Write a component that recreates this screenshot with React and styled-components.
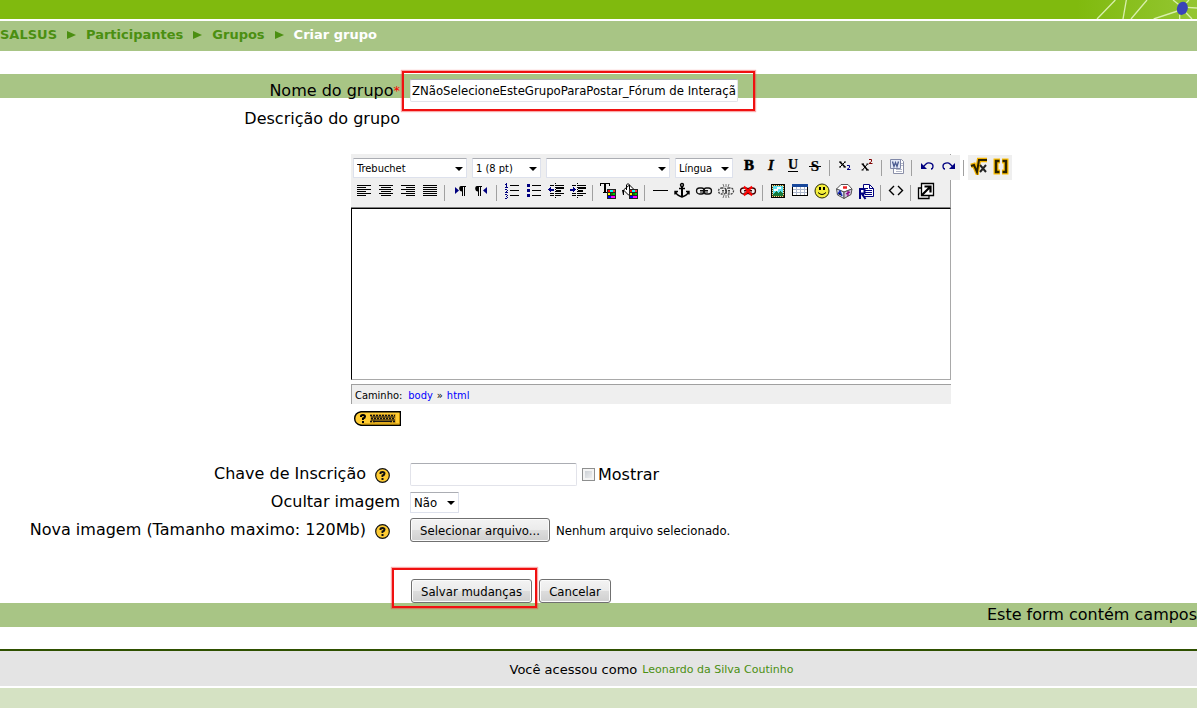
import React, { useRef, useState } from 'react';
import styled, { createGlobalStyle } from 'styled-components';

const GlobalStyle = createGlobalStyle`
  * { box-sizing: border-box; }
  body {
    margin: 0;
    background: #fff;
    color: #000;
    font-family: Verdana, 'DejaVu Sans', sans-serif;
    font-size: 16px;
  }
`;

const uiFont = "Tahoma, 'DejaVu Sans Condensed', 'DejaVu Sans', sans-serif";

const Page = styled.div`
  min-height: 100vh;
  display: flex;
  flex-direction: column;
  overflow-x: hidden;
`;

const Banner = styled.header`
  height: 19px;
  display: flex;
  justify-content: flex-end;
  background: #80ba0e;
`;

const Breadcrumb = styled.nav`
  display: flex;
  align-items: center;
  gap: 9px;
  height: 30px;
  margin-top: 2px;
  padding-bottom: 3px;
  background: #a8c585;
  color: #4b8f11;
  font-size: 13px;
  font-weight: bold;
`;

const CrumbLink = styled.a`
  color: inherit;
  text-decoration: none;
`;

const Current = styled.span`
  color: #fff;
`;

const Form = styled.form`
  padding-top: 23px;
`;

const Row = styled.div`
  display: flex;
  align-items: ${p => (p.$band ? 'flex-start' : 'center')};
  gap: 10px;
  height: 24px;
  padding-top: ${p => (p.$band ? '5px' : '0')};
  margin-top: ${p => p.$gap || 0}px;
  background: ${p => (p.$band ? '#a8c585' : 'transparent')};
`;

const LabelCell = styled.div`
  display: flex;
  flex: none;
  justify-content: flex-end;
  align-items: center;
  width: 400px;
  line-height: 24px;
  padding-right: ${p => (p.$help ? '10px' : '0')};
`;

const Required = styled.span`
  color: #f00;
  font-size: 13px;
`;

const HelpButton = styled.button`
  display: flex;
  margin-left: 9px;
  padding: 3px 0 0;
  border: 0;
  background: none;
`;

const FieldCell = styled.div`
  display: flex;
  align-items: center;
`;

const TextInput = styled.input`
  width: ${p => p.$width}px;
  height: 23px;
  padding: 1px;
  border: 1px solid #e2e3ea;
  border-top-color: #abadb3;
  border-radius: 2px;
  background: #fff;
  color: #000;
  font-family: ${uiFont};
  font-size: 13px;
`;

const CheckLabel = styled.label`
  display: flex;
  align-items: center;
  gap: 3px;
  margin-left: 5px;
`;

const Check = styled.input`
  appearance: none;
  width: 13px;
  height: 13px;
  margin: 0;
  border: 1px solid #8e8f8f;
  background: linear-gradient(135deg, #c4c9cf, #f6f6f6);
  box-shadow: inset 0 0 0 2px #f4f4f4;
  &:checked { background: #4b8f11; }
`;

const SelectBox = styled.span`
  position: relative;
  display: inline-flex;
  width: ${p => p.$width}px;
  &::after {
    content: '';
    position: absolute;
    top: 50%;
    right: 4px;
    margin-top: -1px;
    border: 4px solid transparent;
    border-top-color: #000;
    border-bottom: 0;
    pointer-events: none;
  }
`;

const Select = styled.select`
  appearance: none;
  width: 100%;
  height: ${p => (p.$small ? '20px' : '21px')};
  padding: 1px 3px 0;
  border: 1px solid #dde1ec;
  border-top-color: #abadb3;
  border-radius: 1px;
  background: #fff;
  color: #000;
  font-family: ${uiFont};
  font-size: ${p => (p.$small ? '11px' : '13px')};
`;

const Button = styled.button`
  height: 24px;
  width: ${p => p.$width}px;
  padding: 0;
  border: 1px solid #707070;
  border-radius: 3px;
  background: linear-gradient(#f3f3f3, #ebebeb 50%, #dddddd 50%, #cfcfcf);
  box-shadow: inset 0 0 0 1px #fbfbfb;
  color: #000;
  font-family: ${uiFont};
  font-size: 13px;
  white-space: nowrap;
`;

const FileName = styled.span`
  margin-left: 6px;
  font-family: ${uiFont};
  font-size: 13px;
`;

const Marked = styled.div`
  position: relative;
  display: flex;
  &::after {
    content: '';
    position: absolute;
    inset: ${p => p.$inset};
    border: 2px solid #f01010;
    box-shadow: 0 0 1px 1px rgba(240, 40, 40, 0.4);
    pointer-events: none;
  }
`;

const Editor = styled.div`
  width: 600px;
  margin: 23px 0 0 351px;
`;

const Toolbar = styled.div`
  height: 54px;
  padding: 1px 0 0 2px;
  border-right: 1px solid #a0a0a0;
  border-bottom: 1px solid #808080;
  background: #efefef;
`;

const ToolRow = styled.div`
  display: flex;
  align-items: center;
  height: 25px;
`;

const SelectGroup = styled.div`
  display: flex;
  flex: none;
  gap: 5px;
  margin-right: 5px;
`;

const ToolButton = styled.button`
  display: flex;
  flex: none;
  align-items: center;
  justify-content: center;
  width: 22px;
  height: ${p => (p.$short ? '22px' : '25px')};
  padding: 0 0 3px;
  border: 0;
  background: #efefef;
`;

const Separator = styled.span`
  flex: none;
  width: 8px;
  height: 16px;
  background: linear-gradient(#a0a0a0, #a0a0a0) 3px 0 / 1px 100% no-repeat;
`;

const Canvas = styled.textarea`
  display: block;
  width: 100%;
  height: 172px;
  border: 1px solid #a9a9a9;
  border-top-color: #000;
  border-left-color: #000;
  resize: none;
  outline: none;
`;

const StatusBar = styled.div`
  display: flex;
  align-items: center;
  gap: 4px;
  height: 20px;
  margin-top: 4px;
  padding: 1px 0 0 3px;
  border-left: 1px solid #a0a0a0;
  border-top: 1px solid #a0a0a0;
  background: #efefef;
  font-family: ${uiFont};
  font-size: 11px;
`;

const PathLink = styled.a`
  color: #00f;
  text-decoration: none;
`;

const PathLabel = styled.span`
  margin-right: 2px;
`;

const KeyboardHelp = styled.button`
  display: block;
  margin: 7px 0 0 3px;
  padding: 0;
  border: 0;
  background: none;
  line-height: 0;
`;

const Actions = styled.div`
  display: flex;
  gap: 7px;
  margin: 37px 0 0 411px;
`;

const RequiredNote = styled.p`
  margin: 0;
  line-height: 24px;
  background: #a8c585;
  text-align: right;
  white-space: nowrap;
`;

const Footer = styled.footer`
  display: flex;
  justify-content: center;
  align-items: center;
  gap: 5px;
  height: 37px;
  margin-top: 22px;
  padding: 2px 0 0 106px;
  border-top: 2px solid #2f5000;
  background: #e4e4e4;
  font-size: 13px;
`;

const UserLink = styled.a`
  color: #4b8f11;
  font-size: 11px;
  text-decoration: none;
`;

const Bottom = styled.div`
  flex: 1;
  min-height: 20px;
  margin-top: 2px;
  background: #d5e2c3;
`;

const NAVY = '#000080';
const serif = "'Liberation Serif', serif";

function Letter({ children, x = 9, y = 13, size = 14, ...rest }) {
  return (
    <text x={x} y={y} fontSize={size} fontFamily={serif} fontWeight="bold" textAnchor="middle" {...rest}>
      {children}
    </text>
  );
}

function Swatches() {
  return (
    <g>
      <path fill="#222" d="M8 7h9v10H8z" />
      <path fill="#f00" d="M9 8h2v2H9z" />
      <path fill="#0ff" d="M11 8h3v2h-3z" />
      <path fill="#f33" d="M14 8h2v2h-2z" />
      <path fill="#ff0" d="M9 11h2v2H9z" />
      <path fill="#080" d="M12 11h2v2h-2z" />
      <path fill="#0c0" d="M14 11h2v2h-2z" />
      <path fill="#00f" d="M9 14h3v2H9z" />
      <path fill="#f0f" d="M12 14h4v2h-4z" />
    </g>
  );
}

function Chain({ color = '#111', dashed }) {
  return (
    <g fill="none" stroke={color} strokeWidth="1.300" strokeDasharray={dashed ? '2 1' : undefined}>
      <rect x="1.5" y="6" width="8" height="6" rx="3" />
      <rect x="8.5" y="6" width="8" height="6" rx="3" />
      <path d="M5 8.500h8M5 10h8" strokeWidth="1" />
    </g>
  );
}

const icons = {
  bold: <Letter size={15} stroke="#000" strokeWidth="0.6">B</Letter>,
  italic: <Letter size={15} fontStyle="italic" stroke="#000" strokeWidth="0.3">I</Letter>,
  underline: <g><Letter y={12} stroke="#000" strokeWidth="0.2">U</Letter><path d="M4 14h10v1H4z" /></g>,
  strike: <g><Letter y={14} size={15} stroke="#000" strokeWidth="0.2">S</Letter><path d="M3 9h12v1H3z" /></g>,
  sub: (
    <g>
      <path fill="none" stroke="#000" strokeWidth="1.600" d="M4 5l5 5" />
      <path fill="none" stroke="#000" d="M9 5l-5 5M3 5h2.500M8 5h2M3 10h2M7.500 10H10" />
      <path fill="none" stroke={NAVY} d="M11 8.500h2.500v2L11 12.500h3.500" />
    </g>
  ),
  sup: (
    <g>
      <path fill="none" stroke="#000" strokeWidth="1.600" d="M4.500 7l5 6" />
      <path fill="none" stroke="#000" d="M9.500 7l-5 6M3.500 7H6M8.500 7h2M3.500 13h2M8 13h3" />
      <path fill="none" stroke="#800000" d="M11 2.500h2.500v2L11 6.500h3.500" />
    </g>
  ),
  word: (
    <g>
      <path fill="#fff" stroke="#8a8fa8" d="M5.500 2.500h8l2 2v12h-10z" />
      <path stroke="#b4b8c8" d="M12 6.500h3M12 8.500h3M8 12.500h6M8 14.500h6" />
      <path fill="#e3e8f6" stroke="#8088a8" d="M2.500 2.500h10v9h-10z" />
      <path fill="none" stroke="#4a5a90" strokeWidth="1.300" d="M4.500 4.500L6 9.500l1.500-4 1.500 4 1.500-5" />
    </g>
  ),
  undo: (
    <g>
      <path fill={NAVY} d="M3 6v6h6z" />
      <path fill="none" stroke={NAVY} strokeWidth="1.300" d="M5 10l3-3c2-2 7-1 7 2 0 2-1 3-2 3" />
    </g>
  ),
  redo: (
    <g>
      <path fill={NAVY} d="M15 6v6H9z" />
      <path fill="none" stroke={NAVY} strokeWidth="1.300" d="M13 10l-3-3C8 5 3 6 3 9c0 2 1 3 2 3" />
    </g>
  ),
  root: (
    <g fill="none">
      <path stroke="#f5b400" strokeWidth="4.500" d="M1 9l3-1 3 7 2-12h8" />
      <path stroke="#2a2200" strokeWidth="2" d="M1 9l3-1 3 7 2-12h8" />
      <path stroke="#222" strokeWidth="2" d="M10 8l6 7M16 8l-6 7" />
    </g>
  ),
  brackets: (
    <g fill="none">
      <path stroke="#ffc000" strokeWidth="5" d="M8 4H4v11h4M10 4h4v11h-4" />
      <path stroke="#2a2200" strokeWidth="2.500" d="M7.500 4H4v11h3.500M10.500 4H14v11h-3.500" />
    </g>
  ),
  left: <path stroke="#000" d="M2 3.500h14M2 5.500h9M2 7.500h14M2 9.500h9M2 11.500h14M2 13.500h9" />,
  center: <path stroke="#000" d="M2 3.500h14M4 5.500h10M2 7.500h14M4 9.500h10M2 11.500h14M4 13.500h10" />,
  right: <path stroke="#000" d="M2 3.500h14M7 5.500h9M2 7.500h14M7 9.500h9M2 11.500h14M7 13.500h9" />,
  justify: <path stroke="#000" d="M2 3.500h14M2 5.500h14M2 7.500h14M2 9.500h14M2 11.500h14M2 13.500h14" />,
  ltr: (
    <g>
      <path fill={NAVY} d="M4 5v7l4-3.500z" />
      <path d="M10 4h5v1h-1v9h-1V5h-1v9h-1V9.500c-3.500 0-3.500-5.500-1-5.500z" />
    </g>
  ),
  rtl: (
    <g>
      <path fill={NAVY} d="M14 5v7l-4-3.500z" />
      <path d="M4 4h5v1H8v9H7V5H6v9H5V9.500C1.500 9.500 1.500 4 4 4z" />
    </g>
  ),
  ordered: (
    <g>
      <path stroke="#000" d="M7 3.500h9M7 8.500h9M7 13.500h9" />
      <path fill={NAVY} d="M3 1h1v4H3zM2 2h1v1H2zM2 5h3v1H2zM2 7h2v1H2zM4 8h1v1H4zM3 9h1v1H3zM2 10h3v1H2zM2 12h2v1H2zM4 13h1v1H4zM3 14h1v1H3zM4 15h1v1H4zM2 16h2v1H2z" />
    </g>
  ),
  bullets: (
    <g>
      <path stroke="#000" d="M7 3.500h9M7 8.500h9M7 13.500h9" />
      <path fill={NAVY} d="M2 2h3v3H2zM2 7h3v3H2zM2 12h3v3H2z" />
    </g>
  ),
  outdent: (
    <g>
      <path stroke="#000" d="M3 3.500h4M9 3.500h8M3 13.500h4M9 13.500h5M3 11.500h4M9 11.500h8" />
      <path stroke="#000" strokeWidth="2" d="M9 6h8M9 9h5" />
      <path stroke="#000" strokeDasharray="1 1" d="M8.500 1v15" />
      <path fill={NAVY} d="M1 7.500l3-3v2h3v2H4v2z" />
    </g>
  ),
  indent: (
    <g>
      <path stroke="#000" d="M3 3.500h4M9 3.500h8M3 13.500h4M9 13.500h5M3 11.500h4M9 11.500h8" />
      <path stroke="#000" strokeWidth="2" d="M9 6h8M9 9h5" />
      <path stroke="#000" strokeDasharray="1 1" d="M8.500 1v15" />
      <path fill={NAVY} d="M7 7.500l-3-3v2H1v2h3v2z" />
    </g>
  ),
  textColor: <g><path d="M1 1h10v3h-1V2H7v8h1v1H4v-1h1V2H2v2H1z" /><Swatches /></g>,
  fillColor: (
    <g>
      <path fill="#fff" stroke="#000" d="M2.500 8l6-5 5 5-6 5z" />
      <path fill="none" stroke="#000" d="M5.500 8V3q1.500-3 3 0v4" />
      <path d="M1 8h2v5H2z" />
      <Swatches />
    </g>
  ),
  rule: <path d="M2 8h15v1H2z" />,
  anchor: (
    <g fill="none" stroke="#000" strokeWidth="1.400">
      <circle cx="9" cy="3" r="1.500" />
      <path strokeWidth="2" d="M9 5v10" />
      <path d="M6 6.500h6M3 10c0 3 3 4 6 5 3-1 6-2 6-5M2 12.500V9.500h3M16 12.500V9.500h-3" />
    </g>
  ),
  link: <Chain />,
  unlink: (
    <g>
      <Chain color="#444" dashed />
      <path stroke="#777" d="M6 2l1 3M9 2v3M12 2l-1 3M6 16l1-3M9 16v-3M12 16l-1-3" />
    </g>
  ),
  noLink: <g><Chain color="#400" /><path stroke="#f00" strokeWidth="2" d="M5 4.500l8 9M13 4.500l-8 9" /></g>,
  image: (
    <g>
      <path fill="#e8d8a0" stroke="#000" d="M2.500 2.500h13v13h-13z" />
      <path fill="none" stroke="#5a4000" strokeDasharray="1 1" d="M3.500 3.500h11v11h-11z" />
      <path fill="#5ee0f0" d="M4 4h10v10H4z" />
      <path fill="#fff" d="M5 7h3V5h4v2H9v2H5z" />
      <path fill="#157a3a" d="M4 14v-2l3-3 2 2 2-2 3 3v2z" />
    </g>
  ),
  table: (
    <g>
      <path fill="#fff" stroke="#000" d="M1.500 2.500h15v11h-15z" />
      <path fill="#18489c" d="M1 2h16v3H1z" />
      <path stroke="#aeb8cc" d="M2 7.500h14M2 10.500h14M5.500 5v8M9.500 5v8M13.500 5v8" />
    </g>
  ),
  smile: (
    <g>
      <circle cx="9" cy="9" r="7" fill="#f4ee3c" stroke="#2a2a00" />
      <path d="M6 5h2v3H6zM10 5h2v3h-2z" />
      <path fill="none" stroke="#000" d="M5 10.500q4 4 8 0" />
    </g>
  ),
  chars: (
    <g stroke="#555">
      <path fill="#fff" d="M1.500 7L6 2.500h7L17 7l-8 3z" />
      <path fill="#dfe5fa" d="M1.500 7L9 10v6.500L2.500 13z" />
      <path fill="#d0c3dc" d="M17 7l-8 3v6.500l7-4z" />
      <path stroke="#e22" strokeWidth="2.500" d="M8 5.500h4" />
      <path stroke="#23b" strokeWidth="1.500" d="M3 12l2-3 2 5" />
      <path stroke="#808" strokeWidth="1.300" d="M11 12l4-2M13 9v5" />
    </g>
  ),
  replace: (
    <g fill="none" stroke={NAVY}>
      <path fill="#fff" d="M6.500 2.500h6l4 4v8h-10z" />
      <path d="M12.500 3v3.500h4M8 6.500h3M8 8.500h7M8 10.500h7M8 12.500h7" />
      <path strokeWidth="2" fill="#fff" d="M3 17V7h4.500v4.500H3M5 12l3.500 5" />
    </g>
  ),
  source: <path fill="none" stroke="#000" strokeWidth="1.400" d="M7 4L2.500 8.500 7 13M11 4l4.500 4.500L11 13" />,
  popup: (
    <g fill="none" stroke="#000">
      <path strokeWidth="1.300" fill="#fff" d="M4.500 1.500h12v12h-12z" />
      <path strokeWidth="1.300" d="M4 6H1.500v10.500H12V14" />
      <path strokeWidth="2.200" d="M5 13l8.500-8.500M7.500 4.500h6v6" />
    </g>
  ),
};

const pixelIcons = [
  'left', 'center', 'right', 'justify', 'ordered', 'bullets',
  'outdent', 'indent', 'table', 'image', 'rule', 'textColor',
];

const topTools = ['bold', 'italic', 'underline', 'strike', '|', 'sub', 'sup', '|', 'word', '|', 'undo', 'redo', '|', 'root', 'brackets'];
const bottomTools = [
  'left', 'center', 'right', 'justify', '|', 'ltr', 'rtl', '|',
  'ordered', 'bullets', 'outdent', 'indent', '|', 'textColor', 'fillColor', '|',
  'rule', 'anchor', 'link', 'unlink', 'noLink', '|',
  'image', 'table', 'smile', 'chars', 'replace', '|', 'source', '|', 'popup',
];

function Tools({ items, short }) {
  return items.map((name, i) => (
    name === '|' ? <Separator key={i} /> : (
      <ToolButton key={i} type="button" aria-label={name} $short={short}>
        <svg
          width="18"
          height="18"
          viewBox="0 0 18 18"
          shapeRendering={pixelIcons.includes(name) ? 'crispEdges' : 'auto'}
        >
          {icons[name]}
        </svg>
      </ToolButton>
    )
  ));
}

function DropDown({ id, label, width, options, small }) {
  return (
    <SelectBox $width={width}>
      <Select id={id} aria-label={label} $small={small}>
        {options.map(o => <option key={o}>{o}</option>)}
      </Select>
    </SelectBox>
  );
}

function Help() {
  return (
    <HelpButton type="button" aria-label="Ajuda">
      <svg width="15" height="15" viewBox="0 0 15 15">
        <circle cx="7.5" cy="7.5" r="6.800" fill="#fc3" stroke="#111" strokeWidth="1.200" />
        <path fill="none" stroke="#111" strokeWidth="2" d="M5.500 6V5q0-1 2-1t2 1.500Q9.500 7 7.500 7.500V9M7.500 10v2" />
      </svg>
    </HelpButton>
  );
}

function KeyboardIcon() {
  return (
    <svg width="47" height="15" viewBox="0 0 47 15">
      <path fill="#fc3" stroke="#000" strokeWidth="1.400" d="M7 .7h39.300v13.600H7Q.7 13 .7 7.500T7 .7z" />
      <path fill="none" stroke="#c08a00" d="M8 13h37.500V2" />
      <path fill="none" stroke="#000" strokeWidth="2" d="M7 6V5q0-1 2-1t2 1.500Q11 7 9 7.500V9M9 10v2" />
      <path fill="#e0aa22" d="M16 3h26v9H16z" />
      <path stroke="#111" strokeWidth="1.300" strokeDasharray="2 1" d="M16 4.500h25M17 7.500h24M16 10.500h6M36 10.500h6" />
      <path stroke="#111" d="M17 6h24M17 9h24M21 10.500h16" />
    </svg>
  );
}

function BannerArt() {
  return (
    <svg width="120" height="19" viewBox="0 0 360 57" preserveAspectRatio="none">
      <defs>
        <linearGradient id="fade">
          <stop offset="0" stopColor="#80ba0e" />
          <stop offset="1" stopColor="#94c632" />
        </linearGradient>
      </defs>
      <path fill="url(#fade)" d="M0 0h360v57H0z" />
      <path
        fill="none"
        stroke="#d9efac"
        strokeWidth="4"
        d="M60 57L115 0M138 57L148 0M162 57L210 0M230 57L302 33M288 0l18 14M330 22l30 2M327 38l18 19M308 44v13M328 8l8-8"
      />
      <ellipse cx="316" cy="25" rx="16" ry="20" fill="#3a44b8" transform="rotate(20 316 25)" />
    </svg>
  );
}

function Arrow() {
  return (
    <svg width="11" height="10" viewBox="0 0 11 10">
      <path fill="#4b8f11" d="M1 1l9 4-9 4z" />
    </svg>
  );
}

export default function App() {
  const fileRef = useRef(null);
  const [name, setName] = useState('ZNãoSelecioneEsteGrupoParaPostar_Fórum de Interaçã');

  return (
    <Page>
      <GlobalStyle />
      <Banner><BannerArt /></Banner>
      <Breadcrumb>
        <CrumbLink href="#salsus">SALSUS</CrumbLink>
        <Arrow />
        <CrumbLink href="#participantes">Participantes</CrumbLink>
        <Arrow />
        <CrumbLink href="#grupos">Grupos</CrumbLink>
        <Arrow />
        <Current>Criar grupo</Current>
      </Breadcrumb>

      <Form onSubmit={e => e.preventDefault()}>
        <Row $band>
          <LabelCell>
            <label htmlFor="name">Nome do grupo</label>
            <Required>*</Required>
          </LabelCell>
          <Marked $inset="-8px -17px -9px -8px">
            <TextInput id="name" $width={328} value={name} onChange={e => setName(e.target.value)} />
          </Marked>
        </Row>
        <Row $gap={9}>
          <LabelCell><label htmlFor="description">Descrição do grupo</label></LabelCell>
        </Row>

        <Editor>
          <Toolbar>
            <ToolRow>
              <SelectGroup>
                <DropDown small label="Fonte" width={114} options={['Trebuchet', 'Arial', 'Verdana']} />
                <DropDown small label="Tamanho" width={69} options={['1 (8 pt)', '2 (10 pt)', '3 (12 pt)']} />
                <DropDown small label="Formato" width={124} options={['', 'Normal']} />
                <DropDown small label="Língua" width={58} options={['Língua']} />
              </SelectGroup>
              <Tools items={topTools} />
            </ToolRow>
            <ToolRow>
              <Tools items={bottomTools} short />
            </ToolRow>
          </Toolbar>
          <Canvas id="description" />
          <StatusBar>
            <PathLabel>Caminho:</PathLabel>
            <PathLink href="#body">body</PathLink>
            <span>»</span>
            <PathLink href="#html">html</PathLink>
          </StatusBar>
          <KeyboardHelp type="button" aria-label="Atalhos de teclado"><KeyboardIcon /></KeyboardHelp>
        </Editor>

        <Row $gap={36}>
          <LabelCell $help>
            <label htmlFor="key">Chave de Inscrição</label>
            <Help />
          </LabelCell>
          <FieldCell>
            <TextInput id="key" $width={167} />
            <CheckLabel>
              <Check type="checkbox" />
              Mostrar
            </CheckLabel>
          </FieldCell>
        </Row>
        <Row $gap={4}>
          <LabelCell><label htmlFor="hide">Ocultar imagem</label></LabelCell>
          <DropDown id="hide" width={49} options={['Não', 'Sim']} />
        </Row>
        <Row $gap={4}>
          <LabelCell $help>
            <label htmlFor="image">Nova imagem (Tamanho maximo: 120Mb)</label>
            <Help />
          </LabelCell>
          <FieldCell>
            <input id="image" type="file" ref={fileRef} hidden />
            <Button type="button" $width={140} onClick={() => fileRef.current.click()}>
              Selecionar arquivo...
            </Button>
            <FileName>Nenhum arquivo selecionado.</FileName>
          </FieldCell>
        </Row>

        <Actions>
          <Marked $inset="-11px -5px -5px -19px">
            <Button type="submit" $width={121}>Salvar mudanças</Button>
          </Marked>
          <Button type="button" $width={72}>Cancelar</Button>
        </Actions>
        <RequiredNote>Este form contém campos</RequiredNote>
      </Form>

      <Footer>
        <span>Você acessou como</span>
        <UserLink href="#user">Leonardo da Silva Coutinho</UserLink>
      </Footer>
      <Bottom />
    </Page>
  );
}
